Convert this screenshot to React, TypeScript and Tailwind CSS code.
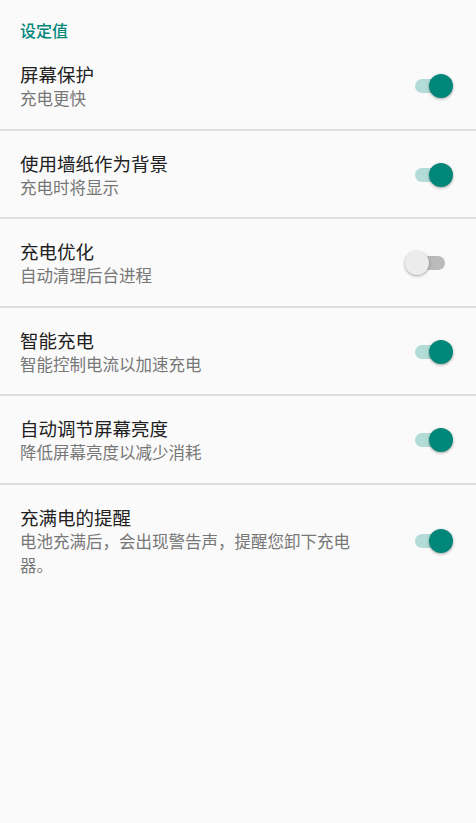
const settings = [
  { title: "屏幕保护", desc: "充电更快", on: true },
  { title: "使用墙纸作为背景", desc: "充电时将显示", on: true },
  { title: "充电优化", desc: "自动清理后台进程", on: false },
  { title: "智能充电", desc: "智能控制电流以加速充电", on: true },
  { title: "自动调节屏幕亮度", desc: "降低屏幕亮度以减少消耗", on: true },
  { title: "充满电的提醒", desc: "电池充满后，会出现警告声，提醒您卸下充电器。", on: true },
];

function Toggle({ on }: { on: boolean }) {
  return (
    <div className="relative w-[48px] h-[24px] shrink-0">
      <div
        className={`absolute left-[10px] top-[5px] w-[30px] h-[14px] rounded-full ${
          on ? "bg-[#b3dcd8]" : "bg-[#bababa]"
        }`}
      />
      <div
        className={`absolute top-0 w-[24px] h-[24px] rounded-full shadow-[0_1px_3px_rgba(0,0,0,0.35)] ${
          on ? "left-[24px] bg-[#00877a]" : "left-0 bg-[#ececec]"
        }`}
      />
    </div>
  );
}

export default function App() {
  return (
    <div
      className="w-[476px] h-[823px] bg-[#fafafa] overflow-hidden"
      style={{ fontFamily: '"Noto Sans CJK SC", "Noto Sans", sans-serif' }}
    >
      <div className="h-[42px] pl-[20px] pt-[20px] text-[16px] leading-[20px] font-medium text-[#00877a]">
        设定值
      </div>
      {settings.map((s, i) => (
        <div
          key={i}
          className={`flex items-center pl-[20px] pr-[23px] pt-[20px] pb-[18.5px] ${
            i < settings.length - 1 ? "border-b-2 border-[#dedede]" : ""
          }`}
        >
          <div className="w-[340px]">
            <div className="text-[18.5px] leading-[24px] text-[#212121]">{s.title}</div>
            <div className="text-[16.5px] leading-[24px] text-[#777777]">{s.desc}</div>
          </div>
          <div className="ml-auto">
            <Toggle on={s.on} />
          </div>
        </div>
      ))}
    </div>
  );
}
